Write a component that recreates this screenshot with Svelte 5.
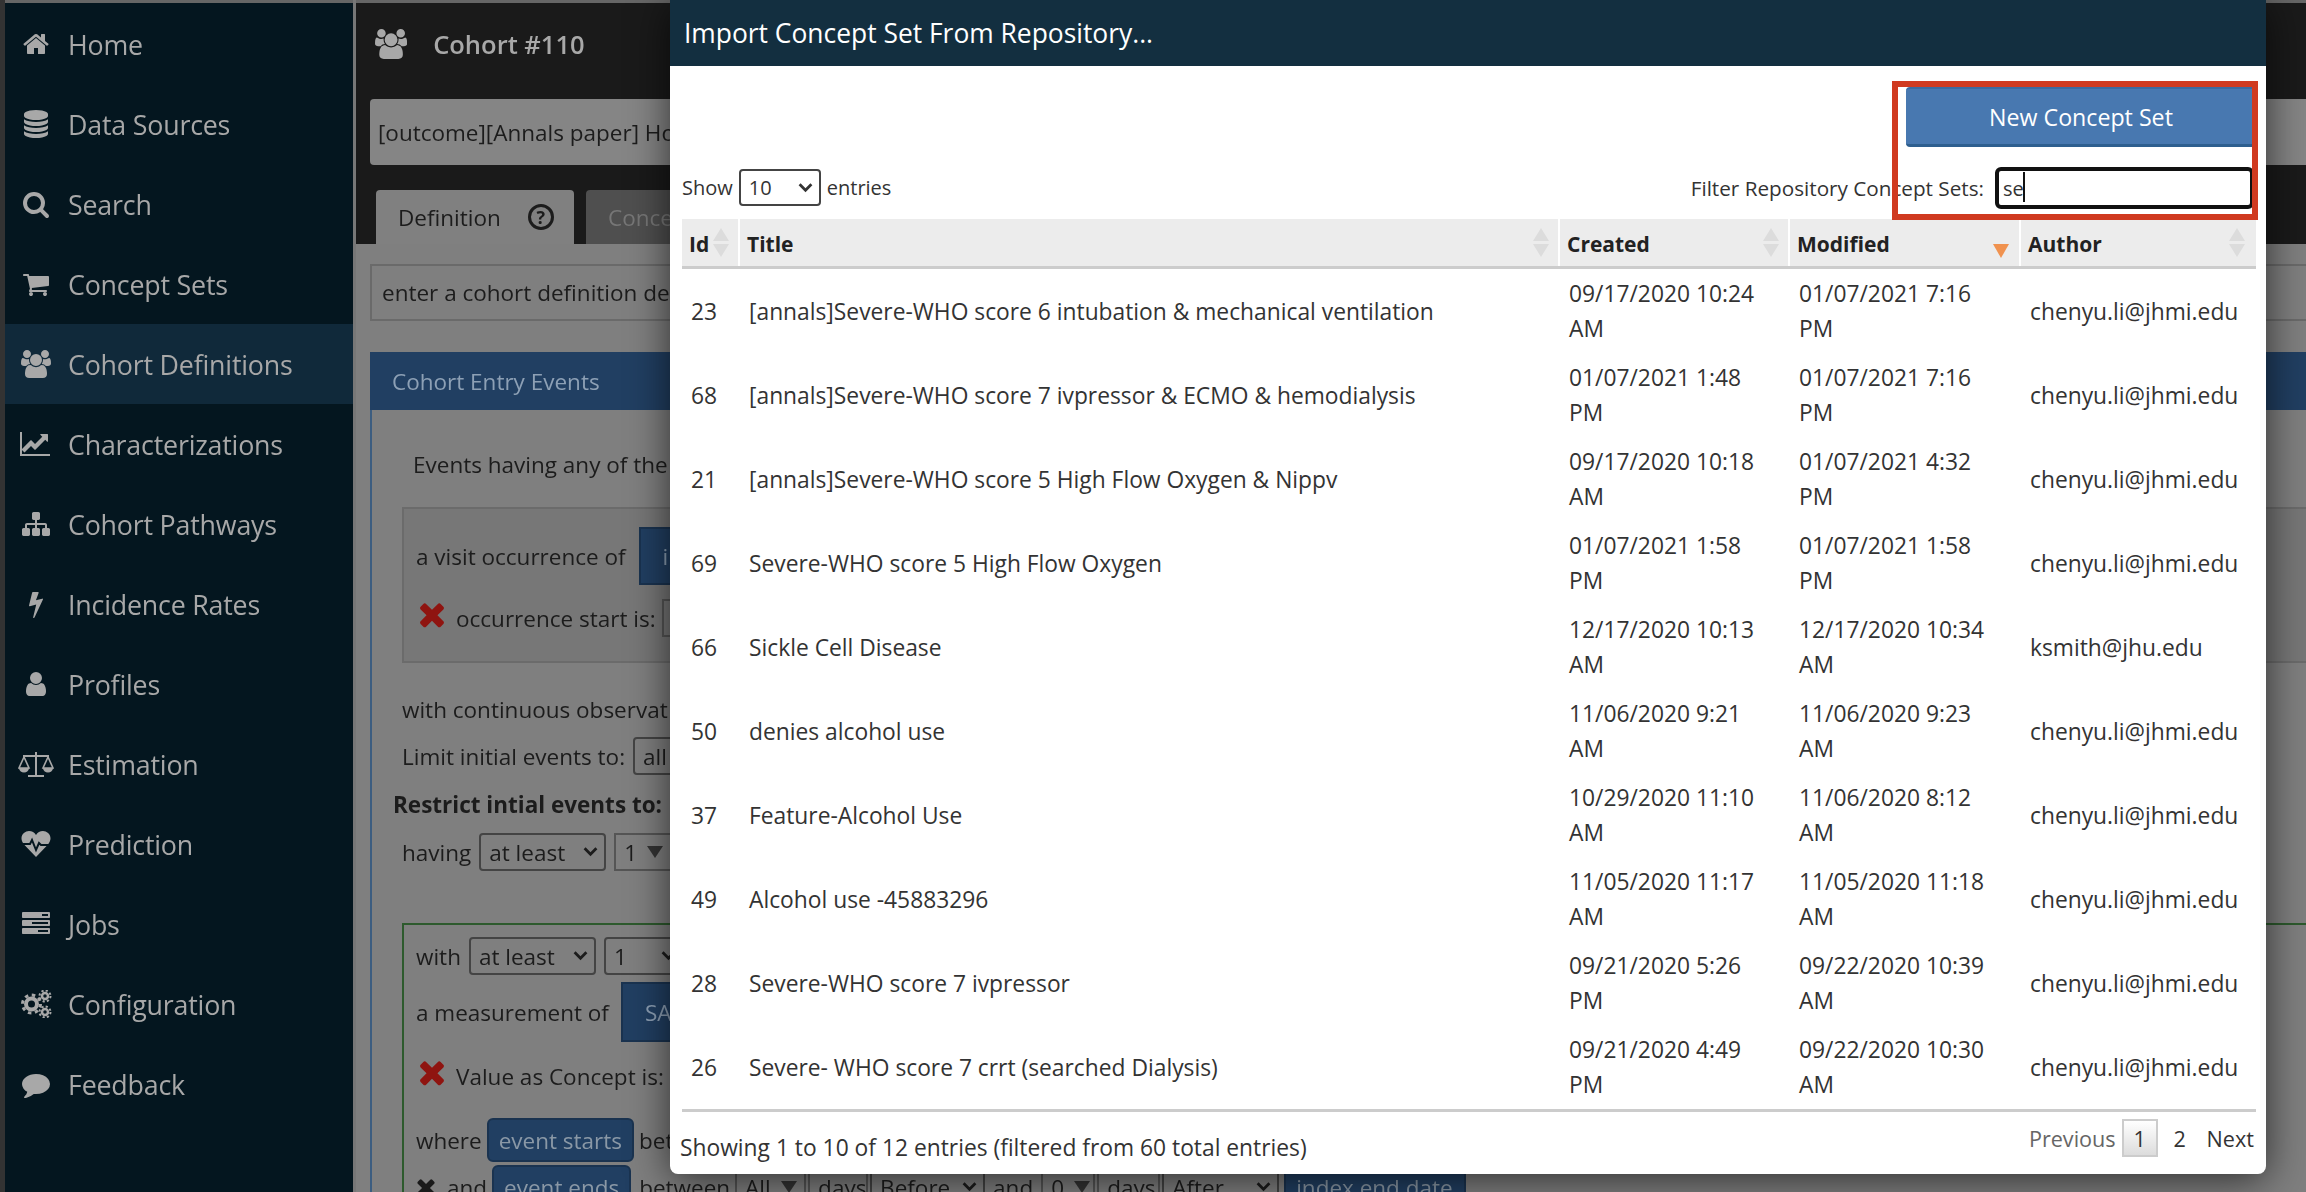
<script>
  const nav = [
    { label: 'Home', icon: 'home' },
    { label: 'Data Sources', icon: 'database' },
    { label: 'Search', icon: 'search' },
    { label: 'Concept Sets', icon: 'cart' },
    { label: 'Cohort Definitions', icon: 'users', active: true },
    { label: 'Characterizations', icon: 'chart' },
    { label: 'Cohort Pathways', icon: 'sitemap' },
    { label: 'Incidence Rates', icon: 'bolt' },
    { label: 'Profiles', icon: 'user' },
    { label: 'Estimation', icon: 'scale' },
    { label: 'Prediction', icon: 'heart' },
    { label: 'Jobs', icon: 'tasks' },
    { label: 'Configuration', icon: 'cogs' },
    { label: 'Feedback', icon: 'comment' }
  ];

  // font awesome 4 outlines, on the 1792 grid
  const paths = {
    home: 'M1472 992v480q0 26-19 45t-45 19h-384v-384h-256v384h-384q-26 0-45-19t-19-45v-480q0-1 .5-3t.5-3l575-474 575 474q1 2 1 6zm223-69l-62 74q-8 9-21 11h-3q-13 0-21-7l-692-577-692 577q-12 8-24 7-13-2-21-11l-62-74q-8-10-7-23.5t11-21.5l719-599q32-26 76-26t76 26l244 204v-195q0-14 9-23t23-9h192q14 0 23 9t9 23v408l219 182q10 8 11 21.5t-7 23.5z',
    database: 'M896 768q237 0 443-43t325-127v170q0 69-103 128t-280 93.5-385 34.5-385-34.5-280-93.5-103-128v-170q119 84 325 127t443 43zm0 768q237 0 443-43t325-127v170q0 69-103 128t-280 93.5-385 34.5-385-34.5-280-93.5-103-128v-170q119 84 325 127t443 43zm0-384q237 0 443-43t325-127v170q0 69-103 128t-280 93.5-385 34.5-385-34.5-280-93.5-103-128v-170q119 84 325 127t443 43zm0-1152q208 0 385 34.5t280 93.5 103 128v128q0 69-103 128t-280 93.5-385 34.5-385-34.5-280-93.5-103-128v-128q0-69 103-128t280-93.5 385-34.5z',
    search: 'M1216 832q0-185-131.5-316.5t-316.5-131.5-316.5 131.5-131.5 316.5 131.5 316.5 316.5 131.5 316.5-131.5 131.5-316.5zm512 832q0 52-38 90t-90 38q-54 0-90-38l-343-342q-179 124-399 124-143 0-273.5-55.5t-225-150-150-225-55.5-273.5 55.5-273.5 150-225 225-150 273.5-55.5 273.5 55.5 225 150 150 225 55.5 273.5q0 220-124 399l343 343q37 37 37 90z',
    cart: 'M704 1536q0 52-38 90t-90 38-90-38-38-90 38-90 90-38 90 38 38 90zm896 0q0 52-38 90t-90 38-90-38-38-90 38-90 90-38 90 38 38 90zm128-1088v512q0 24-16.5 42.5t-40.5 21.5l-1044 122q13 60 13 70 0 16-24 64h920q26 0 45 19t19 45-19 45-45 19h-1024q-26 0-45-19t-19-45q0-11 8-31.5t16-36 21.5-40 15.5-29.5l-177-823h-204q-26 0-45-19t-19-45 19-45 45-19h256q16 0 28.5 6.5t19.5 15.5 13 24.5 8 26 5.5 29.5 4.5 26h1201q26 0 45 19t19 45z',
    users: 'M593 896q-162 5-265 128h-134q-82 0-138-40.5t-56-118.5q0-353 124-353 6 0 43.5 21t97.5 42.5 119 21.5q67 0 133-23-5 37-5 66 0 139 81 256zm1071 637q0 120-73 189.5t-194 69.5h-874q-121 0-194-69.5t-73-189.5q0-53 3.5-103.5t14-109 26.5-108.5 43-97.5 62-81 85.5-53.5 111.5-20q10 0 43 21.5t73 48 107 48 135 21.5 135-21.5 107-48 73-48 43-21.5q61 0 111.5 20t85.5 53.5 62 81 43 97.5 26.5 108.5 14 109 3.5 103.5zm-1024-1277q0 106-75 181t-181 75-181-75-75-181 75-181 181-75 181 75 75 181zm704 384q0 159-112.5 271.5t-271.5 112.5-271.5-112.5-112.5-271.5 112.5-271.5 271.5-112.5 271.5 112.5 112.5 271.5zm576 225q0 78-56 118.5t-138 40.5h-134q-103-123-265-128 81-117 81-256 0-29-5-66 66 23 133 23 59 0 119-21.5t97.5-42.5 43.5-21q124 0 124 353zm-128-609q0 106-75 181t-181 75-181-75-75-181 75-181 181-75 181 75 75 181z',
    chart: 'M1920 1536v128h-1920v-1536h128v1408h1792zm-128-1248v435q0 21-19.5 29.5t-35.5-7.5l-121-121-633 633q-10 10-23 10t-23-10l-233-233-416 416-192-192 585-585q10-10 23-10t23 10l233 233 464-464-121-121q-16-16-7.5-35.5t29.5-19.5h435q14 0 23 9t9 23z',
    sitemap: 'M1792 1248v320q0 40-28 68t-68 28h-320q-40 0-68-28t-28-68v-320q0-40 28-68t68-28h96v-192h-512v192h96q40 0 68 28t28 68v320q0 40-28 68t-68 28h-320q-40 0-68-28t-28-68v-320q0-40 28-68t68-28h96v-192h-512v192h96q40 0 68 28t28 68v320q0 40-28 68t-68 28h-320q-40 0-68-28t-28-68v-320q0-40 28-68t68-28h96v-192q0-52 38-90t90-38h512v-192h-96q-40 0-68-28t-28-68v-320q0-40 28-68t68-28h320q40 0 68 28t28 68v320q0 40-28 68t-68 28h-96v192h512q52 0 90 38t38 90v192h96q40 0 68 28t28 68z',
    bolt: 'M1333 566q18 20 7 44l-540 1157q-13 25-42 25-4 0-14-2-17-5-25.5-19t-4.5-30l197-808-406 101q-4 1-12 1-18 0-31-11-18-15-13-39l201-825q4-14 16-23t28-9h328q19 0 32 12.5t13 29.5q0 8-5 18l-171 463 396-98q8-2 12-2 19 0 34 15z',
    user: 'M1536 1399q0 109-62.5 187t-150.5 78h-854q-88 0-150.5-78t-62.5-187q0-85 8.5-160.5t31.5-152 58.5-131 94-89 134.5-34.5q131 128 313 128t313-128q76 0 134.5 34.5t94 89 58.5 131 31.5 152 8.5 160.5zm-256-887q0 159-112.5 271.5t-271.5 112.5-271.5-112.5-112.5-271.5 112.5-271.5 271.5-112.5 271.5 112.5 112.5 271.5z',
    tasks: 'M1024 1408h640v-128h-640v128zm-384-512h1024v-128h-1024v128zm640-512h384v-128h-384v128zm512 832v256q0 26-19 45t-45 19h-1664q-26 0-45-19t-19-45v-256q0-26 19-45t45-19h1664q26 0 45 19t19 45zm0-512v256q0 26-19 45t-45 19h-1664q-26 0-45-19t-19-45v-256q0-26 19-45t45-19h1664q26 0 45 19t19 45zm0-512v256q0 26-19 45t-45 19h-1664q-26 0-45-19t-19-45v-256q0-26 19-45t45-19h1664q26 0 45 19t19 45z',
    comment: 'M1792 896q0 174-120 321.5t-326 233-450 85.5q-70 0-145-8-198 175-460 242-49 14-114 22-17 2-30.5-9t-17.5-29v-1q-3-4-.5-12t2-10 4.5-9.5l6-9 7-8.5 8-9q7-8 31-34.5t34.5-38 31-39.5 32.5-51 27-59 26-76q-157-89-247.5-220t-90.5-281q0-130 71-248.5t191-204.5 286-136.5 348-50.5q244 0 450 85.5t326 233 120 321.5z',
    times: 'M1490 1322q0 40-28 68l-136 136q-28 28-68 28t-68-28l-294-294-294 294q-28 28-68 28t-68-28l-136-136q-28-28-28-68t28-68l294-294-294-294q-28-28-28-68t28-68l136-136q28-28 68-28t68 28l294 294 294-294q28-28 68-28t68 28l136 136q28 28 28 68t-28 68l-294 294 294 294q28 28 28 68z'
  };

  const viewBoxes = { users: '0 0 1920 1792', chart: '0 0 2048 1792' };

  const me = 'chenyu.li@jhmi.edu';
  const rows = [
    [23, '[annals]Severe-WHO score 6 intubation & mechanical ventilation', '09/17/2020 10:24\nAM', '01/07/2021 7:16\nPM', me],
    [68, '[annals]Severe-WHO score 7 ivpressor & ECMO & hemodialysis', '01/07/2021 1:48\nPM', '01/07/2021 7:16\nPM', me],
    [21, '[annals]Severe-WHO score 5 High Flow Oxygen & Nippv', '09/17/2020 10:18\nAM', '01/07/2021 4:32\nPM', me],
    [69, 'Severe-WHO score 5 High Flow Oxygen', '01/07/2021 1:58\nPM', '01/07/2021 1:58\nPM', me],
    [66, 'Sickle Cell Disease', '12/17/2020 10:13\nAM', '12/17/2020 10:34\nAM', 'ksmith@jhu.edu'],
    [50, 'denies alcohol use', '11/06/2020 9:21\nAM', '11/06/2020 9:23\nAM', me],
    [37, 'Feature-Alcohol Use', '10/29/2020 11:10\nAM', '11/06/2020 8:12\nAM', me],
    [49, 'Alcohol use -45883296', '11/05/2020 11:17\nAM', '11/05/2020 11:18\nAM', me],
    [28, 'Severe-WHO score 7 ivpressor', '09/21/2020 5:26\nPM', '09/22/2020 10:39\nAM', me],
    [26, 'Severe- WHO score 7 crrt (searched Dialysis)', '09/21/2020 4:49\nPM', '09/22/2020 10:30\nAM', me]
  ];

  const columns = [
    { label: 'Id', sort: true },
    { label: 'Title', sort: true },
    { label: 'Created', sort: true },
    { label: 'Modified', sorted: true },
    { label: 'Author', sort: true }
  ];

  const tail = [
    { text: 'All', w: 71, drop: true },
    { text: 'days', w: 60 },
    { text: 'Before', w: 115, chevron: true },
    { text: 'and', w: 36, plain: true },
    { text: '0', w: 54, drop: true },
    { text: 'days', w: 63 },
    { text: 'After', w: 117, chevron: true }
  ];
</script>

{#snippet fa(name, cls)}
  <svg class={cls} viewBox={viewBoxes[name] ?? '0 0 1792 1792'} aria-hidden="true"><path d={paths[name]} fill="currentColor" /></svg>
{/snippet}

{#snippet navIcon(name)}
  {#if name === 'scale'}
    <svg class="ico" viewBox="0 0 36 28" aria-hidden="true" fill="none" stroke="currentColor" stroke-width="2">
      <path d="M18 2v23M10 26h16M5 6h26" />
      <path d="M6 7 1 18h10zM30 7l-5 11h10z" stroke-width="1.6" />
      <path d="M1 18a5 4.5 0 0 0 10 0zM25 18a5 4.5 0 0 0 10 0z" fill="currentColor" stroke="none" />
    </svg>
  {:else if name === 'heart'}
    <svg class="ico" viewBox="0 0 30 28" aria-hidden="true">
      <path d="M15 27 3 14.5C-3 7 3 1 8 1c3 0 5.500 1.500 7 4 1.500-2.500 4-4 7-4 5 0 11 6 5 13.500z" fill="currentColor" />
      <path d="M0 14h9l2-4 4 10 3-7 2 2h10" fill="none" stroke="#04161f" stroke-width="2" />
    </svg>
  {:else if name === 'cogs'}
    <svg class="ico" viewBox="0 0 32 28" aria-hidden="true" fill="none" stroke="currentColor">
      <circle cx="11.500" cy="14" r="5.500" stroke-width="4" />
      <circle cx="11.500" cy="14" r="9" stroke-width="3" stroke-dasharray="3.500 3.570" />
      <circle cx="25" cy="6" r="3" stroke-width="2.500" />
      <circle cx="25" cy="6" r="5.500" stroke-width="2" stroke-dasharray="2.200 2.120" />
      <circle cx="25" cy="22" r="3" stroke-width="2.500" />
      <circle cx="25" cy="22" r="5.500" stroke-width="2" stroke-dasharray="2.200 2.120" />
    </svg>
  {:else}
    {@render fa(name, 'ico')}
  {/if}
{/snippet}

{#snippet sel(text, w)}
  <span class="sel" style="width: {w}px">
    <select aria-label={text}><option>{text}</option></select>
    <svg viewBox="0 0 14 10" aria-hidden="true"><path d="M1.500 2 7 7.500 12.500 2" fill="none" stroke="currentColor" stroke-width="2.600" /></svg>
  </span>
{/snippet}

{#snippet drop(text, w)}
  <span class="drop" style="width: {w}px">{text}<i></i></span>
{/snippet}

<div class="page">
  <aside class="sidebar">
    {#each nav as item}
      <a class="nav-item" class:active={item.active} href="#/">
        <span class="slot">{@render navIcon(item.icon)}</span>
        {item.label}
      </a>
    {/each}
  </aside>

  <main class="main">
    <div class="head">
      <div class="head-title">
        {@render fa('users', 'head-icon')}
        <span>Cohort #110</span>
      </div>
      <div class="name-input">[outcome][Annals paper] Ho</div>
      <div class="tabs">
        <div class="tab current">Definition <span class="help">?</span></div>
        <div class="tab">Conce</div>
      </div>
    </div>

    <div class="content">
      <div class="desc">enter a cohort definition de</div>

      <section class="panel">
        <div class="panel-head">Cohort Entry Events</div>
        <div class="panel-body">
          <div class="line intro">Events having any of the</div>

          <div class="box">
            <div class="row r-visit">a visit occurrence of <span class="concept">i</span></div>
            <div class="row r-start">
              {@render fa('times', 'x')}
              <span>occurrence start is:</span>
              {@render drop('', 60)}
            </div>
          </div>

          <div class="line r-cont">with continuous observat</div>
          <div class="row r-limit">Limit initial events to: {@render sel('all', 80)}</div>
          <div class="line r-restrict">Restrict intial events to:</div>
          <div class="row r-having">
            having {@render sel('at least', 127)} {@render drop('1', 60)}
          </div>

          <div class="green">
            <div class="row r-with">with {@render sel('at least', 127)} {@render sel('1', 80)}</div>
            <div class="row r-measure">a measurement of <span class="concept tall">SA</span></div>
            <div class="row r-value">
              {@render fa('times', 'x')}
              <span>Value as Concept is:</span>
            </div>
            <div class="row r-where">where <span class="pill">event starts</span> between</div>
            <div class="row r-and">
              {@render fa('times', 'x small')}
              and <span class="pill">event ends</span> between
              <span class="tail">
                {#each tail as t}
                  {#if t.chevron}
                    {@render sel(t.text, t.w)}
                  {:else if t.drop}
                    {@render drop(t.text, t.w)}
                  {:else if t.plain}
                    <span class="tail-text">{t.text}</span>
                  {:else}
                    <span class="drop" style="width: {t.w}px">{t.text}</span>
                  {/if}
                {/each}
                <span class="pill end">index end date</span>
              </span>
            </div>
          </div>
        </div>
      </section>
    </div>
  </main>
</div>

<div class="modal" role="dialog" aria-label="Import Concept Set From Repository...">
  <div class="modal-head">Import Concept Set From Repository...</div>
  <div class="modal-body">
    <div class="actions">
      <button class="primary">New Concept Set</button>
    </div>

    <div class="controls">
      <div class="length">
        Show
        <span class="sel length-sel">
          <select aria-label="entries"><option>10</option></select>
          <svg viewBox="0 0 14 10" aria-hidden="true"><path d="M1.500 2 7 7.500 12.500 2" fill="none" stroke="currentColor" stroke-width="2.600" /></svg>
        </span>
        entries
      </div>
      <label class="filter">
        Filter Repository Concept Sets:
        <span class="search-wrap">
          <input value="se" readonly />
          <span class="caret"></span>
        </span>
      </label>
    </div>

    <table>
      <colgroup>
        <col style="width: 58px" />
        <col style="width: 820px" />
        <col style="width: 230px" />
        <col style="width: 231px" />
        <col style="width: 235px" />
      </colgroup>
      <thead>
        <tr>
          {#each columns as c}
            <th>
              {c.label}
              {#if c.sort}
                <span class="sort"><i class="up"></i><i class="down"></i></span>
              {:else if c.sorted}
                <span class="sorted"></span>
              {/if}
            </th>
          {/each}
        </tr>
      </thead>
      <tbody>
        {#each rows as r}
          <tr>
            <td>{r[0]}</td>
            <td>{r[1]}</td>
            <td class="date">{r[2]}</td>
            <td class="date">{r[3]}</td>
            <td>{r[4]}</td>
          </tr>
        {/each}
      </tbody>
    </table>

    <div class="foot">
      <div class="info">Showing 1 to 10 of 12 entries (filtered from 60 total entries)</div>
      <div class="pager">
        <span class="muted">Previous</span>
        <span class="page-btn">1</span>
        <span class="page-link">2</span>
        <span class="next">Next</span>
      </div>
    </div>
  </div>

  <div class="callout"></div>
</div>

<style>
  :global(body) {
    margin: 0;
    overflow: hidden;
    background: #7f7f7f;
    font-family: "Open Sans", "Liberation Sans", sans-serif;
  }

  .page {
    display: flex;
    width: 2306px;
    height: 1192px;
    overflow: hidden;
    background: #333;
    filter: blur(0.5px);
  }

  /* sidebar */
  .sidebar {
    flex: 0 0 348px;
    margin-left: 5px;
    padding-top: 4px;
    background: #04161f;
    border-right: 3px solid #777;
    box-shadow: inset 0 3px 0 #666;
  }

  .nav-item {
    display: flex;
    align-items: center;
    height: 80px;
    padding-left: 14px;
    color: #a8a8a8;
    font-size: 26.800px;
    letter-spacing: -0.2px;
    text-decoration: none;
  }

  .nav-item.active {
    background: #10293a;
  }

  .slot {
    display: flex;
    justify-content: center;
    width: 34px;
    margin-right: 15px;
  }

  .ico {
    height: 28px;
    width: auto;
    flex: none;
  }

  /* dimmed page behind the dialog */
  .main {
    flex: 1;
    min-width: 0;
    background: #7f7f7f;
    color: #1c1c1c;
    font-size: 22.500px;
  }

  .head {
    height: 244px;
    padding: 4px 0 0 14px;
    background: #1a1a1a;
    box-sizing: border-box;
    box-shadow: inset 0 3px 0 #666;
  }

  .head-title {
    display: flex;
    align-items: center;
    height: 80px;
    padding-left: 5px;
    color: #a8a8a8;
    font-size: 25.500px;
    font-weight: 600;
  }

  .head-icon {
    height: 30px;
    width: auto;
    margin-right: 26px;
  }

  .name-input {
    display: flex;
    align-items: center;
    height: 66px;
    margin-top: 15px;
    padding-left: 8px;
    background: #858585;
    border-radius: 4px 0 0 4px;
  }

  .tabs {
    display: flex;
    gap: 12px;
    margin: 25px 0 0 6px;
  }

  .tab {
    display: flex;
    align-items: center;
    height: 54px;
    padding: 0 22px;
    background: #4f4f4f;
    color: #777;
    border-radius: 4px 4px 0 0;
  }

  .tab.current {
    width: 198px;
    padding-right: 0;
    box-sizing: border-box;
    background: #808080;
    color: #1c1c1c;
  }

  .help {
    display: flex;
    align-items: center;
    justify-content: center;
    width: 26px;
    height: 26px;
    margin-left: 27px;
    border: 3px solid #1c1c1c;
    border-radius: 50%;
    font-size: 18px;
    font-weight: 700;
    line-height: 1;
    box-sizing: border-box;
    flex: none;
  }

  .content {
    padding: 20px 0 0 14px;
  }

  .desc {
    display: flex;
    align-items: center;
    height: 57px;
    padding-left: 10px;
    border: 2px solid #6a6a6a;
    border-right: 0;
    box-sizing: border-box;
  }

  .panel {
    margin-top: 31px;
    border-left: 2px solid #3c5d80;
  }

  .panel-head {
    display: flex;
    align-items: center;
    height: 58px;
    margin-left: -2px;
    padding-left: 22px;
    background: #213f62;
    color: #8da0b5;
  }

  .panel-body {
    padding-left: 30px;
  }

  .line,
  .row {
    display: flex;
    align-items: center;
    gap: 8px;
  }

  .intro {
    height: 40px;
    margin-top: 34px;
    padding-left: 11px;
  }

  .box {
    height: 156px;
    margin-top: 23px;
    padding: 18px 0 0 12px;
    background: #777;
    border: 2px solid #6b6b6b;
    border-right: 0;
    box-sizing: border-box;
  }

  .r-visit {
    height: 58px;
    gap: 13px;
  }

  .concept {
    display: flex;
    align-items: center;
    width: 260px;
    height: 58px;
    padding-left: 22px;
    background: #213f62;
    border: 2px solid #1a3350;
    color: #8da0b5;
    box-sizing: border-box;
    flex: none;
  }

  .concept.tall {
    height: 60px;
  }

  .r-start {
    height: 38px;
    margin-top: 14px;
    gap: 6px;
  }

  .r-value {
    gap: 6px;
  }

  .x {
    width: 36px;
    height: 36px;
    margin: -8px 0 0 -2px;
    color: #8f1410;
    flex: none;
  }

  .x.small {
    width: 26px;
    height: 26px;
    margin: 0 0 0 -3px;
    color: #1a1a1a;
  }

  .r-cont {
    height: 30px;
    margin-top: 31px;
  }

  .r-limit {
    height: 38px;
    margin-top: 13px;
  }

  .r-restrict {
    height: 30px;
    margin: 14px 0 0 -9px;
    font-weight: 700;
  }

  .r-having {
    height: 38px;
    margin-top: 14px;
  }

  .sel {
    position: relative;
    display: inline-flex;
    height: 38px;
    flex: none;
  }

  .sel select {
    width: 100%;
    height: 100%;
    padding: 0 0 0 8px;
    appearance: none;
    background: transparent;
    border: 2px solid #444;
    border-radius: 4px;
    color: inherit;
    font: inherit;
  }

  .sel svg {
    position: absolute;
    top: 13px;
    right: 8px;
    width: 15px;
    height: 11px;
    pointer-events: none;
  }

  .drop {
    display: inline-flex;
    align-items: center;
    height: 38px;
    padding-left: 8px;
    border: 2px solid #555;
    box-sizing: border-box;
    flex: none;
  }

  .drop i {
    width: 0;
    height: 0;
    margin-left: 10px;
    border: 8px solid transparent;
    border-top: 12px solid #333;
    border-bottom: 0;
  }

  .green {
    height: 400px;
    margin-top: 52px;
    padding: 12px 0 0 12px;
    border: 2px solid #2d5a2d;
    border-right: 0;
    box-sizing: border-box;
  }

  .r-with {
    height: 38px;
  }

  .r-measure {
    height: 60px;
    margin-top: 7px;
    gap: 12px;
  }

  .r-value {
    height: 40px;
    margin-top: 14px;
  }

  .r-where {
    height: 44px;
    margin-top: 22px;
    gap: 5px;
  }

  .r-and {
    height: 44px;
    margin-top: 3px;
    white-space: nowrap;
  }

  .r-and > .pill {
    margin-left: -3px;
  }

  .pill {
    display: inline-flex;
    align-items: center;
    height: 44px;
    padding: 0 10px;
    background: #213f62;
    border: 2px solid #1a3350;
    border-radius: 6px;
    color: #8a98a6;
    box-sizing: border-box;
    flex: none;
  }

  .tail {
    display: flex;
    align-items: center;
    gap: 2px;
    margin-left: -3px;
  }

  .tail-text {
    padding: 0 6px;
  }

  .end {
    margin-left: 3px;
    width: 182px;
    border-radius: 0;
  }

  /* dialog */
  .modal {
    position: absolute;
    top: 0;
    left: 670px;
    display: flex;
    flex-direction: column;
    width: 1596px;
    height: 1174px;
    background: #fff;
    border-radius: 0 0 8px 8px;
    box-shadow: 0 5px 40px rgba(0, 0, 0, 0.65);
    color: #333;
    font-size: 22.800px;
  }

  .modal-head {
    display: flex;
    align-items: center;
    flex: none;
    height: 66px;
    padding-left: 14px;
    background: #132f40;
    color: #fff;
    font-size: 26.400px;
  }

  .modal-body {
    padding: 0 10px 0 12px;
  }

  .actions {
    display: flex;
    justify-content: flex-end;
    padding-top: 21px;
  }

  .primary {
    width: 350px;
    height: 60px;
    background: #4878b0;
    border: 0;
    border-top: 2px solid #3b6a9f;
    border-bottom: 3px solid #2e5f8f;
    border-radius: 4px;
    color: #fff;
    font: inherit;
    font-size: 23.200px;
  }

  .controls {
    display: flex;
    align-items: center;
    justify-content: space-between;
    height: 42px;
    margin-top: 20px;
    font-size: 20px;
  }

  .length {
    display: flex;
    align-items: center;
    gap: 6px;
    padding-bottom: 2px;
  }

  .length-sel {
    width: 82px;
    height: 37px;
  }

  .filter {
    display: flex;
    align-items: center;
    gap: 11px;
    padding-right: 2px;
    font-size: 20.700px;
  }

  .search-wrap {
    position: relative;
    display: block;
  }

  input {
    display: block;
    width: 259px;
    height: 42px;
    padding: 0 0 0 4px;
    background: #fff;
    border: 4px solid #111;
    border-radius: 6px;
    outline: none;
    box-sizing: border-box;
    color: #333;
    font: inherit;
    font-size: 20px;
  }

  .caret {
    position: absolute;
    top: 5px;
    left: 28px;
    width: 2px;
    height: 30px;
    background: #111;
  }

  table {
    width: 1574px;
    margin-top: 10px;
    border-collapse: separate;
    border-spacing: 0;
    table-layout: fixed;
  }

  th {
    position: relative;
    height: 50px;
    padding: 2px 0 0 7px;
    background: #ececec;
    border-bottom: 3px solid #ccc;
    box-shadow: inset -2px 0 0 #fff;
    box-sizing: border-box;
    color: #222;
    font-size: 21px;
    font-weight: 700;
    text-align: left;
  }

  th:last-child {
    box-shadow: none;
  }

  .sort {
    position: absolute;
    top: 9px;
    right: 11px;
    display: flex;
    flex-direction: column;
    gap: 3px;
  }

  .sort i {
    display: block;
    width: 0;
    height: 0;
    border-left: 8px solid transparent;
    border-right: 8px solid transparent;
  }

  .sort .up {
    border-bottom: 13px solid #dcdcdc;
  }

  .sort .down {
    border-top: 13px solid #dcdcdc;
  }

  .sorted {
    position: absolute;
    top: 25px;
    right: 12px;
    width: 0;
    height: 0;
    border-left: 8px solid transparent;
    border-right: 8px solid transparent;
    border-top: 14px solid #f0924f;
  }

  td {
    height: 84px;
    padding: 0 0 0 9px;
    box-sizing: border-box;
    line-height: 35px;
  }

  td.date {
    white-space: pre-line;
  }

  .foot {
    display: flex;
    justify-content: space-between;
    height: 61px;
    padding: 7px 2px 0 0;
    border-top: 3px solid #ccc;
    box-sizing: border-box;
    width: 1574px;
  }

  .info {
    padding-top: 13px;
    margin-left: -2px;
  }

  .pager {
    display: flex;
    align-items: center;
    height: 38px;
    font-size: 21.600px;
  }

  .muted {
    color: #666;
  }

  .page-btn {
    display: flex;
    align-items: center;
    justify-content: center;
    width: 36px;
    height: 38px;
    margin-left: 6px;
    background: linear-gradient(#fff, #dcdcdc);
    border: 2px solid #ccc;
    box-sizing: border-box;
  }

  .page-link {
    width: 44px;
    text-align: center;
  }

  .next {
    margin-left: 5px;
  }

  .callout {
    position: absolute;
    top: 81px;
    left: 1222px;
    width: 366px;
    height: 139px;
    border: 6px solid #d03a20;
    box-sizing: border-box;
    pointer-events: none;
  }
</style>
